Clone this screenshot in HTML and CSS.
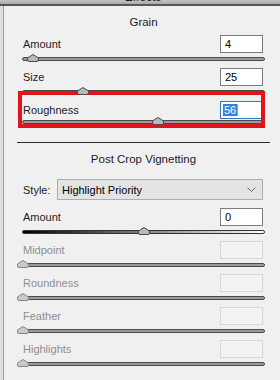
FILE: index.html
```html
<!DOCTYPE html>
<html lang="en">
<head>
    <meta charset="UTF-8">
    <title>Effects</title>
    <link rel="stylesheet" href="styles.css">
</head>
<body>
    <div class="header"><span>Effects</span></div>
    <div class="frame">
        <div class="panel">
            <div class="section-title">Grain</div>

            <div class="row">
                <div class="row-top"><span class="label">Amount</span><div class="num">4</div></div>
                <div class="track">
                    <span class="thumb" style="left: 4%"><svg width="12" height="8" viewBox="0 0 12 8"><path d="M6 0.5 L11.5 4 V6 Q11.5 7.5 10 7.5 H2 Q0.5 7.5 0.5 6 V4 Z"/></svg></span>
                </div>
            </div>
            <div class="row">
                <div class="row-top"><span class="label">Size</span><div class="num">25</div></div>
                <div class="track">
                    <span class="thumb" style="left: 25%"><svg width="12" height="8" viewBox="0 0 12 8"><path d="M6 0.5 L11.5 4 V6 Q11.5 7.5 10 7.5 H2 Q0.5 7.5 0.5 6 V4 Z"/></svg></span>
                </div>
            </div>
            <div class="row active">
                <div class="row-top"><span class="label">Roughness</span><div class="num focused"><span class="selected">56</span><span class="caret"></span></div></div>
                <div class="track">
                    <span class="thumb" style="left: 56%"><svg width="12" height="8" viewBox="0 0 12 8"><path d="M6 0.5 L11.5 4 V6 Q11.5 7.5 10 7.5 H2 Q0.5 7.5 0.5 6 V4 Z"/></svg></span>
                </div>
            </div>

            <div class="divider"></div>
            <div class="section-title second">Post Crop Vignetting</div>

            <div class="style-row">
                <span class="style-label">Style:</span>
                <div class="select">
                    <span>Highlight Priority</span>
                    <svg width="9" height="6" viewBox="0 0 9 6"><polyline points="0.5,0.5 4.5,4.5 8.5,0.5" fill="none" stroke="#6a6a6a" stroke-width="1"/></svg>
                </div>
            </div>

            <div class="row">
                <div class="row-top"><span class="label">Amount</span><div class="num">0</div></div>
                <div class="track gradient">
                    <span class="thumb" style="left: 50%"><svg width="12" height="8" viewBox="0 0 12 8"><path d="M6 0.5 L11.5 4 V6 Q11.5 7.5 10 7.5 H2 Q0.5 7.5 0.5 6 V4 Z"/></svg></span>
                </div>
            </div>
            <div class="row disabled">
                <div class="row-top"><span class="label">Midpoint</span><div class="num"></div></div>
                <div class="track">
                    <span class="thumb" style="left: 0%"><svg width="12" height="8" viewBox="0 0 12 8"><path d="M6 0.5 L11.5 4 V6 Q11.5 7.5 10 7.5 H2 Q0.5 7.5 0.5 6 V4 Z"/></svg></span>
                </div>
            </div>
            <div class="row disabled">
                <div class="row-top"><span class="label">Roundness</span><div class="num"></div></div>
                <div class="track">
                    <span class="thumb" style="left: 0%"><svg width="12" height="8" viewBox="0 0 12 8"><path d="M6 0.5 L11.5 4 V6 Q11.5 7.5 10 7.5 H2 Q0.5 7.5 0.5 6 V4 Z"/></svg></span>
                </div>
            </div>
            <div class="row disabled">
                <div class="row-top"><span class="label">Feather</span><div class="num"></div></div>
                <div class="track">
                    <span class="thumb" style="left: 0%"><svg width="12" height="8" viewBox="0 0 12 8"><path d="M6 0.5 L11.5 4 V6 Q11.5 7.5 10 7.5 H2 Q0.5 7.5 0.5 6 V4 Z"/></svg></span>
                </div>
            </div>
            <div class="row disabled">
                <div class="row-top"><span class="label">Highlights</span><div class="num"></div></div>
                <div class="track">
                    <span class="thumb" style="left: 0%"><svg width="12" height="8" viewBox="0 0 12 8"><path d="M6 0.5 L11.5 4 V6 Q11.5 7.5 10 7.5 H2 Q0.5 7.5 0.5 6 V4 Z"/></svg></span>
                </div>
            </div>

            <div class="highlight-box"></div>
        </div>
    </div>
</body>
</html>
```

FILE: styles.css
```css
body {
    margin: 0;
    background-color: #dedede;
    font-family: "Liberation Sans", Arial, sans-serif;
    font-size: 11px;
    color: #1c1c1c;
    height: 380px;
    overflow: hidden;
}
.header {
    height: 4px;
    border-bottom: 2px solid #575757;
    background: linear-gradient(#c2c2c2, #a9a9a9);
    overflow: hidden;
    text-align: center;
}
.header span {
    display: block;
    font-size: 12px;
    line-height: 12px;
    margin-top: -9px;
    padding-left: 6px;
    color: #222;
}
.frame {
    margin-left: 3px;
    border-left: 1px solid #9c9c9c;
    background-color: #f0f0f0;
    height: 374px;
}
.panel {
    position: relative;
    padding: 0 15px 0 18px;
}
.section-title {
    text-align: center;
    height: 16px;
    line-height: 16px;
    padding-top: 8px;
    margin-bottom: 5px;
    font-size: 11.5px;
}
.section-title.second {
    padding-top: 8px;
    margin-bottom: 12px;
}
.row {
    height: 33px;
}
.row-top {
    display: flex;
    justify-content: space-between;
    align-items: center;
    height: 18px;
}
.label {
    padding-left: 1px;
}
.num {
    width: 43px;
    height: 18px;
    box-sizing: border-box;
    border: 1px solid #7c7c7c;
    background-color: #fff;
    padding-left: 4px;
    line-height: 16px;
    margin-right: 2px;
    color: #000;
}
.num.focused {
    border-color: #2f78c4;
    padding-left: 2px;
}
.selected {
    background-color: #3680d8;
    color: #fff;
    padding: 0 1px;
}
.caret {
    display: inline-block;
    width: 1px;
    height: 12px;
    vertical-align: -2px;
    background-color: #d39a3a;
}
.track {
    position: relative;
    margin-top: 4px;
    height: 4px;
    box-sizing: border-box;
    border: 1px solid #4b4b4b;
    background-color: #9b9b9b;
    border-radius: 2px;
}
.active .track {
    margin-top: 1px;
}
.track.gradient {
    border-color: #333;
    background: linear-gradient(to right, #000, #fff);
}
.thumb {
    position: absolute;
    top: -4px;
    width: 12px;
    height: 8px;
    transform: translateX(-50%);
    z-index: 2;
}
.thumb svg {
    display: block;
    fill: #b9b9b9;
    stroke: #4a4a4a;
    stroke-width: 1;
}
.disabled .label {
    color: #8e8e8e;
}
.disabled .num {
    border-color: #d7d7d7;
    background-color: #f3f3f3;
}
.disabled .thumb svg {
    fill: #cacaca;
    stroke: #858585;
}
.divider {
    height: 1px;
    background-color: #2b2b2b;
    margin: 8px -5px 0 -5px;
}
.style-row {
    display: flex;
    align-items: center;
    height: 21px;
    margin-bottom: 8px;
}
.style-label {
    width: 34px;
    padding-left: 1px;
}
.select {
    flex: 1;
    height: 21px;
    box-sizing: border-box;
    border: 1px solid #adadad;
    background-color: #e3e3e3;
    display: flex;
    align-items: center;
    justify-content: space-between;
    padding: 0 6px 0 4px;
    margin-right: 2px;
    color: #000;
}
.highlight-box {
    position: absolute;
    left: 14px;
    top: 85px;
    width: 247px;
    height: 37px;
    box-sizing: border-box;
    border: 4px solid #e0141a;
    z-index: 1;
}
```
